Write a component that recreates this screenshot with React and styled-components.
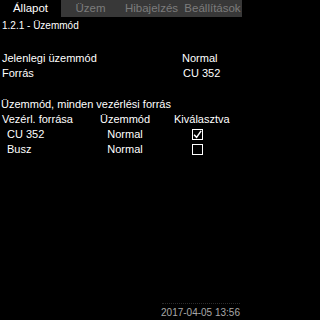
import React from 'react';
import styled, { createGlobalStyle } from 'styled-components';

const GlobalStyle = createGlobalStyle`
  html, body { margin: 0; padding: 0; background: #000; }
  body { font-family: "Liberation Sans", Arial, sans-serif; color: #fff; }
`;

const Screen = styled.div`
  width: 242px; height: 320px; background: #000; display: flex;
  flex-direction: column; overflow: hidden; font-size: 11px;
`;
const TabBar = styled.div`
  display: flex; height: 17px; background: #383838; flex-shrink: 0;
`;
const Tab = styled.div`
  height: 17px; line-height: 17px; font-size: 11.5px; text-align: center;
  width: ${p => p.w}px; background: ${p => (p.active ? '#000' : 'transparent')};
  color: ${p => (p.active ? '#fff' : '#7c7c7c')};
`;
const Crumb = styled.div`
  padding: 2px 0 0 2px; height: 13px; line-height: 13px; font-size: 10px;
`;
const Info = styled.div`
  margin-top: 19px; display: grid; grid-template-columns: 180px 1fr;
  padding-left: 2px; line-height: 15px;
`;
const Value = styled.div` padding-left: ${p => p.pad || 0}px; `;
const SectionTitle = styled.div`
  margin-top: 16px; padding-left: 1px; line-height: 15px;
`;
const Table = styled.div`
  display: grid; grid-template-columns: 92px 66px 1fr; line-height: 15px;
  align-items: center;
`;
const Cell = styled.div`
  padding-left: ${p => p.pad || 0}px;
  height: 15px; display: flex; align-items: center;
  justify-content: ${p => (p.align === 'center' ? 'center' : 'flex-start')};
`;
const Box = styled.div`
  width: 9px; height: 9px; border: 1.5px solid #fff; display: flex;
  align-items: center; justify-content: center; margin-left: 34px;
`;
const Footer = styled.div`
  margin-top: auto; display: flex; flex-direction: column; align-items: flex-end;
  padding: 0 2px 2px 0;
`;
const Dots = styled.div`
  width: 78px; border-top: 1px dotted #2a2a2a; margin-bottom: 3px;
`;
const Stamp = styled.div` color: #a8a8a8; font-size: 10px; line-height: 11px; `;

const Check = () => (
  <svg width="9" height="9" viewBox="0 0 10 10">
    <path d="M1.2 5.2 L4 8.2 L9 1" fill="none" stroke="#fff" strokeWidth="1.7" />
  </svg>
);

const rows = [
  { src: 'CU 352', mode: 'Normal', on: true },
  { src: 'Busz', mode: 'Normal', on: false },
];

export default function App() {
  return (
    <Screen>
      <GlobalStyle />
      <TabBar>
        <Tab active w={61}>Állapot</Tab>
        <Tab w={59}>Üzem</Tab>
        <Tab w={63}>Hibajelzés</Tab>
        <Tab w={59}>Beállítások</Tab>
      </TabBar>
      <Crumb>1.2.1 - Üzemmód</Crumb>
      <Info>
        <div>Jelenlegi üzemmód</div>
        <Value>Normal</Value>
        <div>Forrás</div>
        <Value pad={1}>CU 352</Value>
      </Info>
      <SectionTitle>Üzemmód, minden vezérlési forrás</SectionTitle>
      <Table>
        <Cell pad={2}>Vezérl. forrása</Cell>
        <Cell align="center">Üzemmód</Cell>
        <Cell pad={16}>Kiválasztva</Cell>
        {rows.map(r => (
          <React.Fragment key={r.src}>
            <Cell pad={7}>{r.src}</Cell>
            <Cell align="center">{r.mode}</Cell>
            <Cell><Box>{r.on && <Check />}</Box></Cell>
          </React.Fragment>
        ))}
      </Table>
      <Footer>
        <Dots />
        <Stamp>2017-04-05 13:56</Stamp>
      </Footer>
    </Screen>
  );
}
